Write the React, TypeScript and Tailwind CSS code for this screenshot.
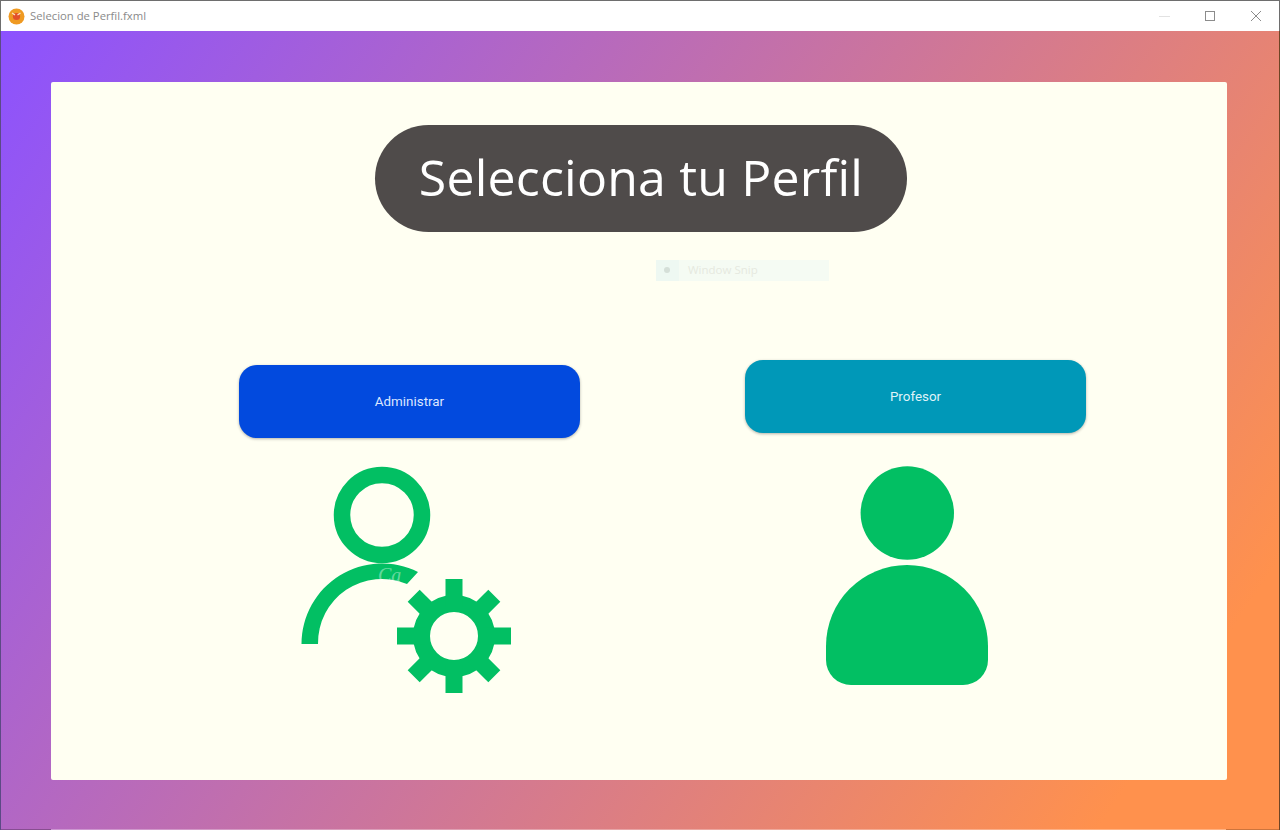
import React from 'react';

const GREEN = '#02bf63';
const gearAngles = [0, 45, 90, 135];

const AdminIcon = () => (
  <svg width="225" height="240" viewBox="295 460 225 240">
    <circle cx="382" cy="515" r="40" fill="none" stroke={GREEN} strokeWidth="16.5" />
    <path d="M301.5 644A80.5 80.5 0 0 1 418 572L407 584A64 64 0 0 0 318 644Z" fill={GREEN} />
    <text x="378" y="582" fontFamily="Liberation Serif, serif" fontStyle="italic" fontSize="20" fill="#ffffff" fillOpacity="0.4">Ca</text>
    <circle cx="454" cy="636" r="32.5" fill="none" stroke={GREEN} strokeWidth="17" />
    {gearAngles.map((a) => (
      <g key={a} transform={`rotate(${a} 454 636)`}>
        <rect x="445.5" y="579" width="17" height="28" fill={GREEN} />
        <rect x="445.5" y="665" width="17" height="28" fill={GREEN} />
      </g>
    ))}
  </svg>
);

const UserIcon = () => (
  <svg width="175" height="230" viewBox="820 460 175 230">
    <circle cx="907.3" cy="513" r="46.7" fill={GREEN} />
    <path d="M826 646A81 81 0 0 1 988 646V660A25 25 0 0 1 963 685H851A25 25 0 0 1 826 660Z" fill={GREEN} />
  </svg>
);

const TitleBar = () => (
  <div className="flex h-[30px] shrink-0 items-center border-x border-[#6e6e6e] bg-white pl-[7px]">
    <svg width="17" height="17" viewBox="0 0 17 17">
      <circle cx="8.5" cy="8.5" r="8" fill="#ef9a22" />
      <circle cx="8.5" cy="8.5" r="3.6" fill="#e2502a" />
      <path d="M4 5l3 2M12.5 5l-3 2" stroke="#fbe3c8" strokeWidth="1.2" />
    </svg>
    <span className="ml-[5px] text-[11.3px] text-[#8a8a8a] font-['Open_Sans',sans-serif]">Selecion de Perfil.fxml</span>
    <div className="ml-auto flex items-center">
      <svg width="12" height="12" viewBox="0 0 12 12" className="mr-[33px]">
        <path d="M0 6.5H11" stroke="#e2e2e2" />
      </svg>
      <svg width="12" height="12" viewBox="0 0 12 12" className="mr-[34px]">
        <rect x="1.5" y="1.5" width="9" height="9" fill="none" stroke="#8c8c8c" />
      </svg>
      <svg width="12" height="12" viewBox="0 0 12 12" className="mr-[17px]">
        <path d="M1 1L11 11M11 1L1 11" stroke="#8c8c8c" />
      </svg>
    </div>
  </div>
);

export default function App() {
  return (
    <div className="flex h-[830px] w-[1280px] flex-col overflow-hidden border-t border-[#6e6e6e] font-['Roboto',sans-serif]">
      <TitleBar />
      <div className="flex flex-1 flex-col border-x border-l-[#5c4a85] border-r-[#6e4525] bg-[linear-gradient(124deg,#8c52ff_0%,#ff914d_90%)]">
        <div className="flex-1 pl-[50px] pt-[51px]">
          <div className="relative h-[698px] w-[1176px] rounded-[2px] bg-[#fffff2] pt-[43px]">
            <div className="ml-[324px] flex h-[107px] w-[532px] items-center justify-center rounded-[54px] bg-[#4f4b4a] pb-[2px]">
              <h1 className="text-[50px] font-normal tracking-[0.2px] text-white font-['Open_Sans',sans-serif]">Selecciona tu Perfil</h1>
            </div>

            {/* leftover snip toolbar that shows through in the capture */}
            <div className="absolute left-[605px] top-[178px] flex h-[21px] w-[173px] items-center bg-[#f5fbf3]">
              <div className="flex h-full w-[23px] items-center justify-center bg-[#eef8f2]">
                <div className="mb-px ml-[-1px] h-[6px] w-[6px] rounded-full bg-[#d5dfd8]" />
              </div>
              <span className="mb-px ml-[9px] text-[11.5px] text-[#e6e9df] font-['Open_Sans',sans-serif]">Window Snip</span>
            </div>

            <div className="mt-[128px] flex items-start gap-[165px] pl-[188px]">
              <div className="mt-[5px] w-[341px]">
                <button className="flex h-[73px] w-full items-center justify-center rounded-[18px] bg-[#024ade] pt-px text-[13.4px] text-[#dde6ff] shadow-[0_1px_3px_rgba(0,0,0,0.3)]">
                  Administrar
                </button>
                <div className="ml-[56px] mt-[22px]">
                  <AdminIcon />
                </div>
              </div>
              <div className="w-[341px]">
                <button className="flex h-[73px] w-full items-center justify-center rounded-[18px] bg-[#0098b8] pt-px text-[13.4px] text-[#dff3f8] shadow-[0_1px_3px_rgba(0,0,0,0.3)]">
                  Profesor
                </button>
                <div className="ml-[75px] mt-[27px]">
                  <UserIcon />
                </div>
              </div>
            </div>
          </div>
        </div>
        <div className="flex h-px shrink-0">
          <div className="w-[50px] bg-black/25" />
          <div className="flex-1 bg-white/30" />
          <div className="w-[53px] bg-black/20" />
        </div>
      </div>
    </div>
  );
}
